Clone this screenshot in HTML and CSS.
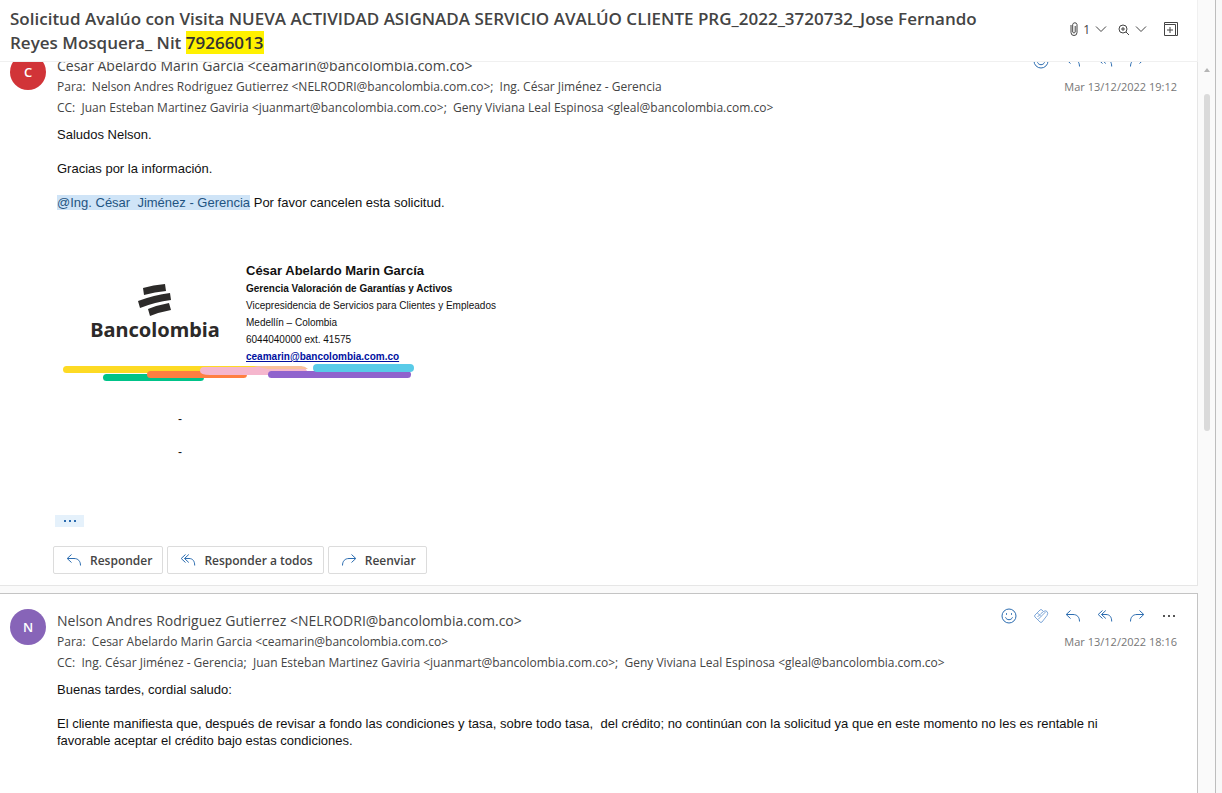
FILE: index.html
```
<!DOCTYPE html>
<html lang="es">
<head>
  <meta charset="UTF-8" />
  <meta name="viewport" content="width=device-width, initial-scale=1.0" />
  <title>Solicitud Avalúo con Visita</title>
  <link rel="stylesheet" href="styles.css">
</head>
<body>
  <svg class="defs" width="0" height="0" aria-hidden="true">
    <symbol id="smile" viewBox="0 0 16 16">
      <circle cx="8" cy="8" r="7" />
      <path d="M4.500 9.300c.6 1.600 1.900 2.400 3.500 2.400s2.900-.8 3.500-2.400" />
      <path d="M5.500 5.200v1.600M10.500 5.200v1.600" />
    </symbol>
    <symbol id="like" viewBox="0 0 16 16">
      <path d="M7 14 2 9Q1 8 2 7L7 2Q8 1 9 2L10.500 3.500Q12.500 2 14 3.500T14 7.500L9 14Q8 15 7 14z" />
      <path d="M4.500 5 8 8.500 13 3.500M4.500 9 8 5.500 10.500 3.500M5 11.500 8 8.500" />
    </symbol>
    <symbol id="reply" viewBox="0 0 16 16">
      <path d="M5.500 2.500 1.200 6.500l4.300 4M1.500 6.500H8c4 0 6.500 2.500 6.500 7" />
    </symbol>
    <symbol id="reply-all" viewBox="0 0 16 16">
      <path d="M5.500 2.500 1.200 6.500l4.300 4M8.800 2.500 4.500 6.500l4.300 4M4.800 6.500H9c3.700 0 5.700 2.500 5.700 7" />
    </symbol>
    <symbol id="forward" viewBox="0 0 16 16">
      <path d="M10.500 2.500l4.300 4-4.300 4M14.500 6.500H8c-4 0-6.500 2.500-6.500 7" />
    </symbol>
    <symbol id="more" viewBox="0 0 16 16">
      <path class="dot" d="M2 7h2v2H2zM7 7h2v2H7zM12 7h2v2h-2z" />
    </symbol>
    <symbol id="chevron" viewBox="0 0 12 12">
      <path d="M1 3.500 6 8.500l5-5" />
    </symbol>
  </svg>

  <div class="app">
    <main class="reader">
      <header class="subject">
        <h1>Solicitud Avalúo con Visita NUEVA ACTIVIDAD ASIGNADA SERVICIO AVALÚO CLIENTE PRG_2022_3720732_Jose Fernando Reyes Mosquera_ Nit <mark>79266013</mark></h1>
        <div class="tools">
          <button class="tool" aria-label="Datos adjuntos">
            <svg class="clip" viewBox="0 0 8 16"><path d="M1 4v7.500a3 3 0 0 0 6 0V3.500a2.200 2.200 0 0 0-4.300 0v7.500a1.300 1.300 0 0 0 2.500 0V5" /></svg>
            <span>1</span>
            <svg class="chevron"><use href="#chevron" /></svg>
          </button>
          <button class="tool" aria-label="Zoom">
            <svg class="lens" viewBox="0 0 12 12"><circle cx="5" cy="6" r="4" /><path d="M8 9l3 3M3 6h4M5 4v4" /></svg>
            <svg class="chevron"><use href="#chevron" /></svg>
          </button>
          <button class="tool popout" aria-label="Abrir en ventana nueva">
            <svg class="icon" viewBox="0 0 16 16"><path d="M1.500 3.500h11v11h-11zM1.500 1.500h13v13M7 6v6M4 9h6M12.500 14.500h2M1.500 1.500v2" /></svg>
          </button>
        </div>
      </header>

      <div class="thread">
        <article class="message scrolled">
          <div class="avatar red">C</div>
          <div class="content">
            <div class="head">
              <div class="people">
                <div class="sender">Cesar Abelardo Marin Garcia &lt;ceamarin@bancolombia.com.co&gt;</div>
                <div>Para:&nbsp; Nelson Andres Rodriguez Gutierrez &lt;NELRODRI@bancolombia.com.co&gt;;&nbsp; Ing. César Jiménez - Gerencia</div>
                <div>CC:&nbsp; Juan Esteban Martinez Gaviria &lt;juanmart@bancolombia.com.co&gt;;&nbsp; Geny Viviana Leal Espinosa &lt;gleal@bancolombia.com.co&gt;</div>
              </div>
              <div class="side">
                <div class="actions">
                  <button aria-label="Reaccionar"><svg class="icon"><use href="#smile" /></svg></button>
                  <button aria-label="Responder"><svg class="icon"><use href="#reply" /></svg></button>
                  <button aria-label="Responder a todos"><svg class="icon"><use href="#reply-all" /></svg></button>
                  <button aria-label="Reenviar"><svg class="icon"><use href="#forward" /></svg></button>
                  <button aria-label="Más acciones"><svg class="icon"><use href="#more" /></svg></button>
                </div>
                <time>Mar 13/12/2022 19:12</time>
              </div>
            </div>

            <div class="body">
              <p>Saludos Nelson.</p>
              <p>Gracias por la información.</p>
              <p><a class="mention" href="#">@Ing. César&nbsp; Jiménez - Gerencia</a> Por favor cancelen esta solicitud.</p>
            </div>

            <div class="signature">
              <div class="brand">
                <svg class="mark" viewBox="0 0 34 32" aria-hidden="true">
                  <path d="M5 4Q15 1 27 0l1 7Q17 8 6 11z" />
                  <path d="M0 17Q16 11 32 9l1 7Q17 18 2 24z" />
                  <path d="M10 25Q20 21 31 19l2 7Q22 28 12 32z" />
                </svg>
                <span class="brand-name">Bancolombia</span>
              </div>
              <div class="card">
                <div class="name">César Abelardo Marin García</div>
                <div class="role">Gerencia Valoración de Garantías y Activos</div>
                <div>Vicepresidencia de Servicios para Clientes y Empleados</div>
                <div>Medellín – Colombia</div>
                <div>6044040000 ext. 41575</div>
                <div><a href="mailto:ceamarin@bancolombia.com.co">ceamarin@bancolombia.com.co</a></div>
              </div>
            </div>
            <svg class="stripes" viewBox="0 0 352 18" aria-hidden="true">
              <rect x="0" y="2" width="240" height="7" rx="3.500" fill="#fdda24" />
              <rect x="40" y="10" width="101" height="7" rx="3.500" fill="#00c389" />
              <rect x="84" y="7" width="100" height="7" rx="3.500" fill="#ff7f41" />
              <path d="M141 3h98q4 1 5 4l-30 4h-67q-10 0-10-4 0-4 4-4z" fill="#f5b6cd" />
              <path d="M190 2h48q4 0 7 3h-40z" fill="#f9c19b" />
              <rect x="205" y="7" width="143" height="7" rx="3.500" fill="#9063cd" />
              <rect x="250" y="0" width="101" height="8" rx="4" fill="#59cbe8" />
            </svg>

            <div class="dashes">
              <p>-</p>
              <p>-</p>
            </div>

            <div class="footer">
              <button class="expand" aria-label="Mostrar historial"><svg class="icon"><use href="#more" /></svg></button>
              <div class="replies">
                <button class="reply"><svg class="icon"><use href="#reply" /></svg>Responder</button>
                <button class="reply"><svg class="icon"><use href="#reply-all" /></svg>Responder a todos</button>
                <button class="reply"><svg class="icon"><use href="#forward" /></svg>Reenviar</button>
              </div>
            </div>
          </div>
        </article>

        <article class="message selected">
          <div class="avatar purple">N</div>
          <div class="content">
            <div class="head">
              <div class="people">
                <div class="sender">Nelson Andres Rodriguez Gutierrez &lt;NELRODRI@bancolombia.com.co&gt;</div>
                <div>Para:&nbsp; Cesar Abelardo Marin Garcia &lt;ceamarin@bancolombia.com.co&gt;</div>
                <div>CC:&nbsp; Ing. César Jiménez - Gerencia;&nbsp; Juan Esteban Martinez Gaviria &lt;juanmart@bancolombia.com.co&gt;;&nbsp; Geny Viviana Leal Espinosa &lt;gleal@bancolombia.com.co&gt;</div>
              </div>
              <div class="side">
                <div class="actions">
                  <button aria-label="Reaccionar"><svg class="icon"><use href="#smile" /></svg></button>
                  <button class="pale" aria-label="Me gusta"><svg class="icon"><use href="#like" /></svg></button>
                  <button aria-label="Responder"><svg class="icon"><use href="#reply" /></svg></button>
                  <button aria-label="Responder a todos"><svg class="icon"><use href="#reply-all" /></svg></button>
                  <button aria-label="Reenviar"><svg class="icon"><use href="#forward" /></svg></button>
                  <button aria-label="Más acciones"><svg class="icon"><use href="#more" /></svg></button>
                </div>
                <time>Mar 13/12/2022 18:16</time>
              </div>
            </div>

            <div class="body">
              <p>Buenas tardes, cordial saludo:</p>
              <p>El cliente manifiesta que, después de revisar a fondo las condiciones y tasa, sobre todo tasa,&nbsp; del crédito; no continúan con la solicitud ya que en este momento no les es rentable ni favorable aceptar el crédito bajo estas condiciones.</p>
            </div>
          </div>
        </article>
      </div>
    </main>

    <div class="scrollbar">
      <div class="arrow"></div>
      <div class="thumb"></div>
    </div>
    <div class="gutter"></div>
  </div>
</body>
</html>
```
FILE: styles.css
```
* { box-sizing: border-box; }

body {
  margin: 0;
  font-family: "Open Sans", "Noto Sans", sans-serif;
  font-size: 12px;
  color: #444;
  background: #fafafa;
}

p { margin: 0; }

button {
  padding: 0;
  border: none;
  background: none;
  font: inherit;
  color: inherit;
  cursor: pointer;
}

svg {
  display: block;
  fill: none;
  stroke: currentColor;
  stroke-width: 1;
}

.defs { position: absolute; }
.dot { fill: currentColor; stroke: none; }

.icon {
  width: 16px;
  height: 16px;
}

.app {
  display: flex;
  height: 100vh;
  overflow: hidden;
}

.reader {
  flex: 1;
  min-width: 0;
  display: flex;
  flex-direction: column;
}

/* subject bar */
.subject {
  display: flex;
  justify-content: space-between;
  gap: 40px;
  padding: 7px 18px 6px 10px;
  background: #fff;
  border-bottom: 1px solid #f0f0f0;
  border-right: 1px solid #f0f0f0;
}

h1 {
  margin: 0;
  max-width: 1010px;
  font-size: 17px;
  line-height: 24px;
  font-weight: 600;
}

mark {
  background: #fff100;
  color: #333;
}

.tools {
  display: flex;
  align-items: center;
  gap: 11px;
  height: 44px;
}

.tool {
  display: flex;
  align-items: center;
  gap: 5px;
}

.popout { margin-left: 5px; }

.clip { width: 8px; height: 16px; }
.lens { width: 12px; height: 12px; }
.chevron { width: 12px; height: 12px; }

/* messages */
.thread {
  flex: 1;
  min-height: 0;
  overflow: hidden;
  display: flex;
  flex-direction: column;
  gap: 7px;
}

.message {
  display: flex;
  gap: 11px;
  padding: 14px 20px 11px 10px;
  background: #fff;
  border: 1px solid #e6e6e6;
  border-left: none;
}

.scrolled {
  flex: none;
  margin-top: -24px;
}

.selected {
  flex: 1 0 auto;
  border-color: #c4c4c4;
  border-bottom: none;
}

.avatar {
  flex: none;
  width: 36px;
  height: 36px;
  margin-top: 1px;
  border-radius: 50%;
  color: #fff;
  font-size: 13px;
  line-height: 36px;
  font-weight: 600;
  text-align: center;
}

.red { background: #d13438; }
.purple { background: #8764b8; }

.content {
  flex: 1;
  min-width: 0;
}

.head {
  display: flex;
  justify-content: space-between;
  line-height: 21px;
}

.people { padding-top: 2px; }
.sender { font-size: 14px; }

.side {
  display: flex;
  flex-direction: column;
  align-items: flex-end;
  gap: 7px;
}

.actions {
  display: flex;
  gap: 16px;
  color: #2b6cb0;
}

.actions .pale { color: #7fa8d9; }
.actions button:last-child { color: #555; }

time {
  font-size: 11px;
  color: #767676;
}

.body {
  display: flex;
  flex-direction: column;
  gap: 17px;
  max-width: 1070px;
  margin-top: 8px;
  font-family: "Liberation Sans", Arial, sans-serif;
  font-size: 13px;
  line-height: 17px;
  color: #111;
}

.mention {
  background: #cfe4f7;
  color: #1f5482;
  text-decoration: none;
}

/* signature */
.signature {
  display: flex;
  gap: 27px;
  margin-top: 50px;
  padding-left: 34px;
  font-family: "Liberation Sans", Arial, sans-serif;
  font-size: 10px;
  line-height: 17px;
  color: #111;
}

.brand {
  display: flex;
  flex-direction: column;
  align-items: center;
  width: 128px;
  padding-top: 23px;
  color: #2c2a29;
}

.mark {
  width: 34px;
  height: 32px;
  fill: #2c2a29;
  stroke: none;
}

.brand-name {
  font-family: "Noto Sans", sans-serif;
  font-size: 20px;
  line-height: 28px;
  font-weight: 700;
}

.name {
  font-size: 13px;
  line-height: 19px;
  font-weight: 700;
}

.role, .card a { font-weight: 700; }
.card a { color: #00109f; }

.stripes {
  width: 352px;
  height: 18px;
  margin: -1px 0 0 6px;
  stroke: none;
}

.dashes {
  display: flex;
  flex-direction: column;
  gap: 16px;
  margin-top: 29px;
  padding-left: 121px;
  font-family: "Liberation Sans", Arial, sans-serif;
  line-height: 17px;
  color: #111;
}

/* reply buttons */
.footer {
  margin: 54px 0 0 -4px;
}

.expand {
  display: flex;
  align-items: center;
  justify-content: center;
  width: 29px;
  height: 12px;
  margin-left: 2px;
  background: #e5f1fb;
  color: #2b6cb0;
}

.replies {
  display: flex;
  gap: 4px;
  margin-top: 19px;
}

.reply {
  display: flex;
  align-items: center;
  gap: 8px;
  height: 28px;
  padding: 0 10px 0 12px;
  border: 1px solid #dcdcdc;
  border-radius: 2px;
  font-weight: 600;
  color: #444;
}

.reply .icon { color: #2b6cb0; }

/* scrollbar */
.scrollbar {
  display: flex;
  flex-direction: column;
  align-items: center;
  width: 18px;
  padding-top: 68px;
  border-right: 1px solid #bdbdbd;
  background: #fafafa;
}

.arrow {
  border: 3px solid transparent;
  border-top: none;
  border-bottom: 4px solid #b5b5b5;
}

.thumb {
  width: 6px;
  height: 47%;
  max-height: 337px;
  margin-top: 22px;
  border-radius: 3px;
  background: #dadada;
}

.gutter {
  width: 6px;
  background: #f8f8f8;
}
```
